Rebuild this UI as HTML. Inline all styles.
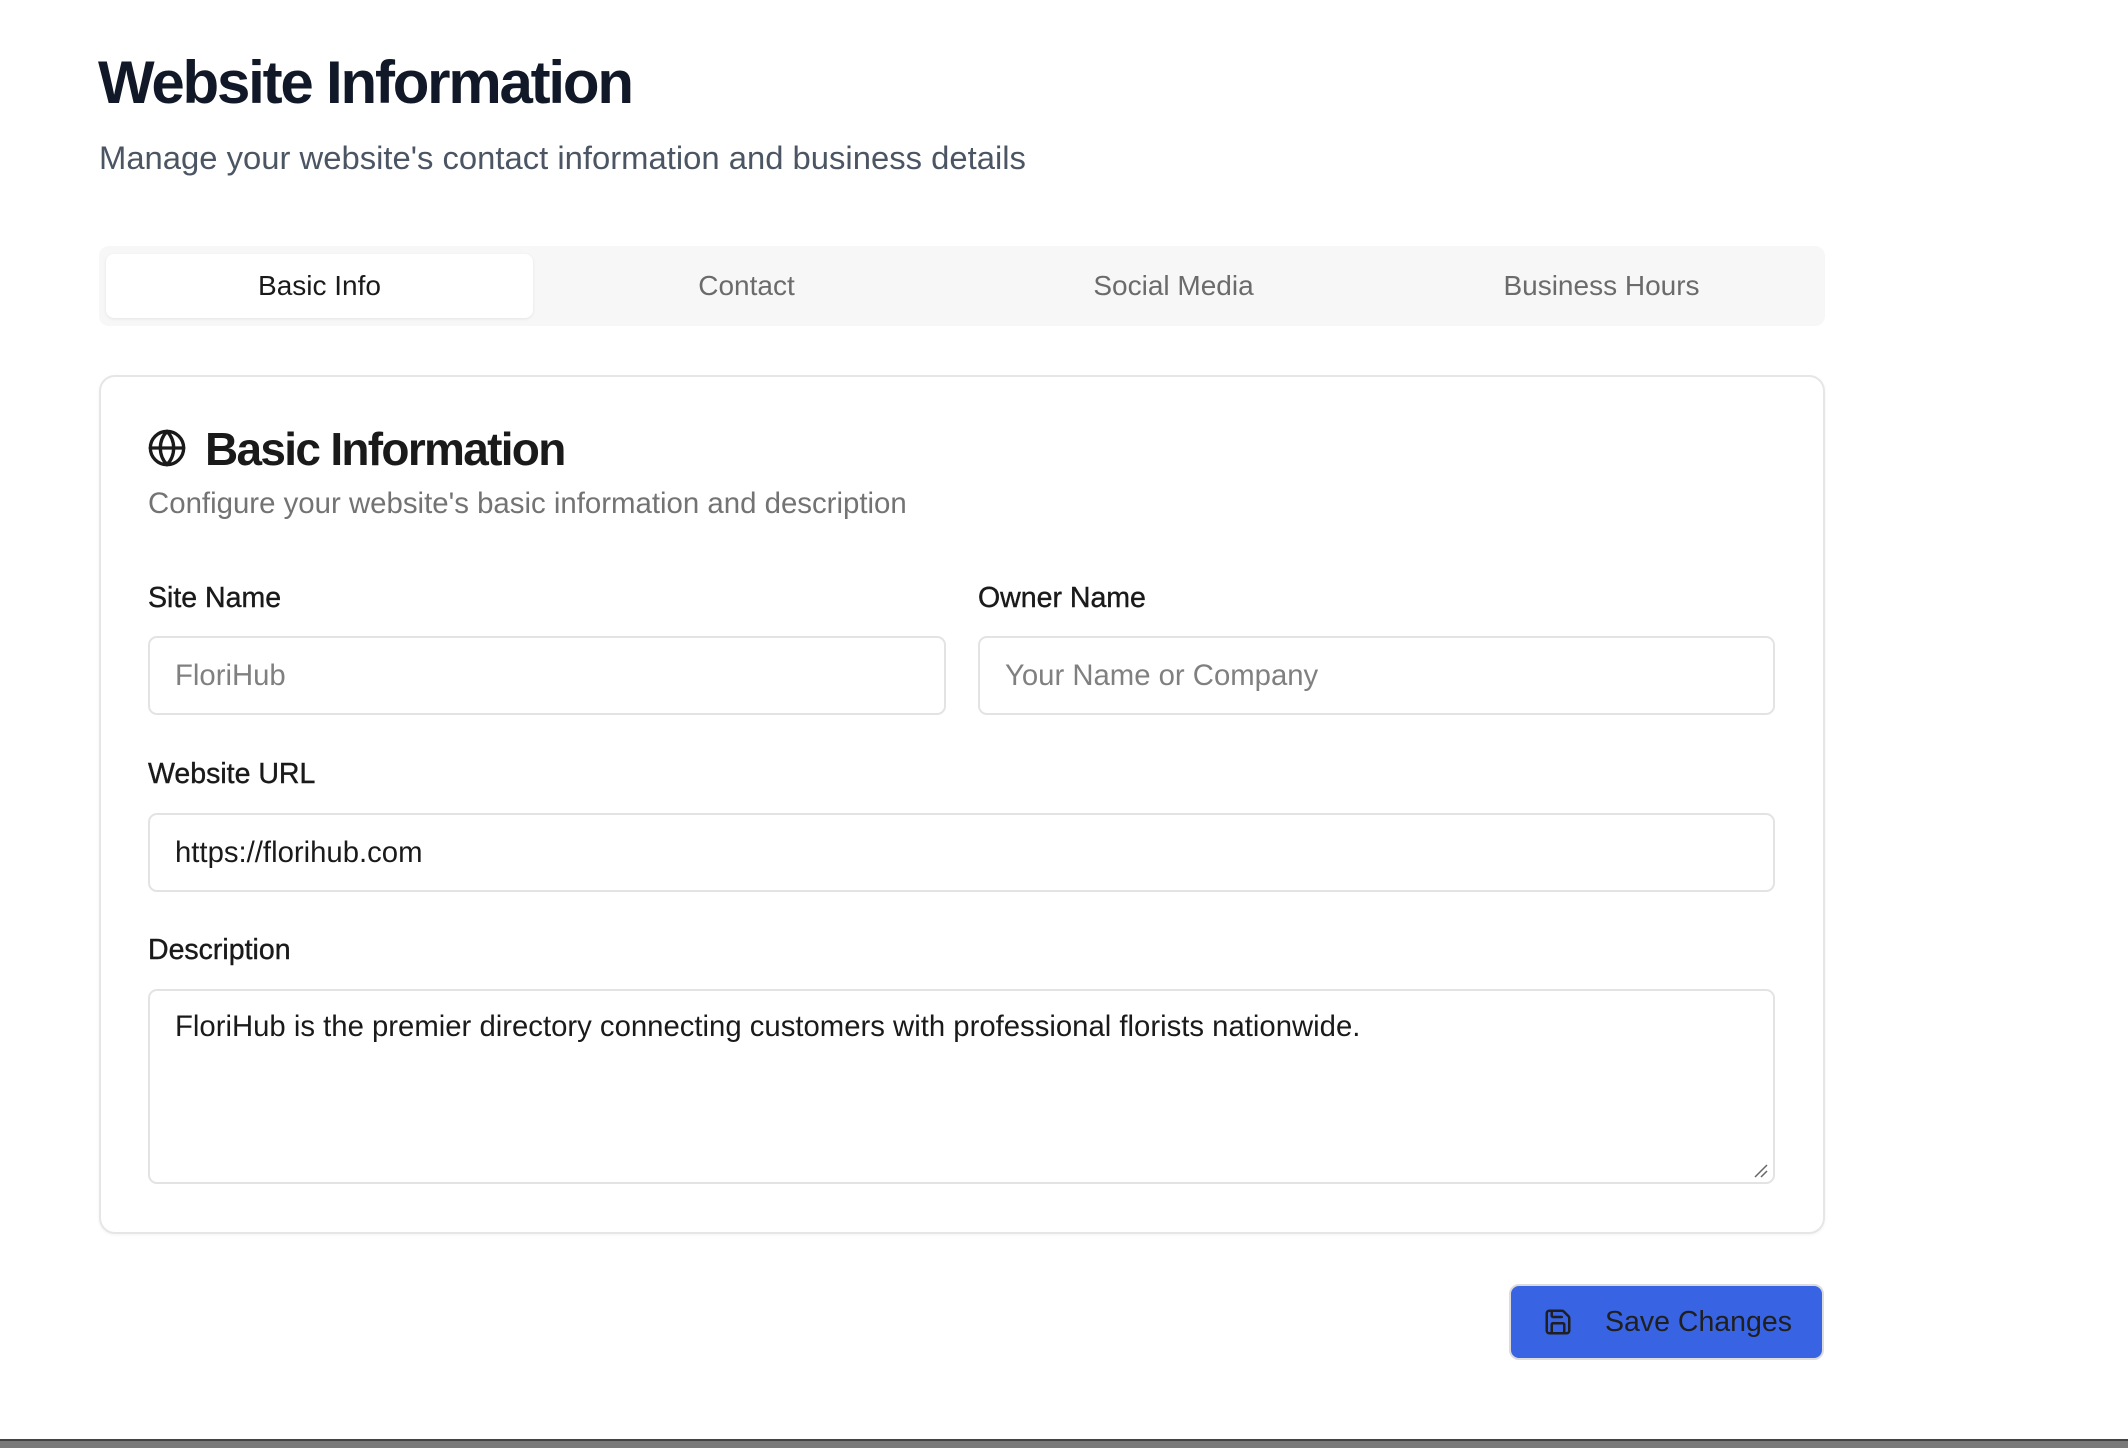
<!DOCTYPE html>
<html><head><meta charset="utf-8"><style>
*{box-sizing:border-box;margin:0;padding:0}
body{width:2128px;height:1448px;background:#fff;font-family:"Liberation Sans",Arial,sans-serif;position:relative;overflow:hidden;color:#1a1a1a}
.abs{position:absolute}
h1{position:absolute;left:98px;top:48px;font-size:60px;font-weight:bold;color:#111827;letter-spacing:-2.2px}
.sub{left:99px;top:139px;font-size:32.8px;color:#4b5563}
.tabs{left:99px;top:246px;width:1726px;height:80px;background:#f7f7f7;border-radius:10px}
.tab{position:absolute;top:8px;height:64px;width:427px;font-size:28px;color:#6b6b6b;display:flex;align-items:center;justify-content:center}
.tab.on{background:#fff;color:#1a1a1a;border-radius:8px;box-shadow:0 1px 3px rgba(0,0,0,.08)}
.card{left:99px;top:375px;width:1726px;height:859px;border:2px solid #e6e6e6;border-radius:16px;box-shadow:0 1px 3px rgba(0,0,0,.05)}
.h2{left:205px;top:422px;font-size:46px;font-weight:bold;letter-spacing:-1.7px;color:#1a1a1a}
.desc{left:148px;top:487px;font-size:29.4px;color:#737373}
.lbl{font-size:28.5px;color:#1a1a1a;left:148px;-webkit-text-stroke:.4px #1a1a1a}
.inp{border:2px solid #e3e3e3;border-radius:9px;font-size:29.3px;padding-left:25px;display:flex;align-items:center;color:#1a1a1a}
.ph{color:#808080}
.btn{left:1509px;top:1284px;width:315px;height:76px;background:#3863e3;border:2px solid #dcdcdc;border-radius:10px;display:flex;align-items:center;font-size:28.5px;color:#1f1f1f}
</style></head><body>
<h1>Website Information</h1>
<div class="abs sub">Manage your website's contact information and business details</div>
<div class="abs tabs">
<div class="tab on" style="left:7px">Basic Info</div>
<div class="tab" style="left:434px">Contact</div>
<div class="tab" style="left:861px">Social Media</div>
<div class="tab" style="left:1289px">Business Hours</div>
</div>
<div class="abs card"></div>
<svg class="abs" style="left:147px;top:428px" width="40" height="40" viewBox="0 0 24 24" fill="none" stroke="#1a1a1a" stroke-width="2" stroke-linecap="round" stroke-linejoin="round"><circle cx="12" cy="12" r="10"/><path d="M12 2a14.5 14.5 0 0 0 0 20 14.5 14.5 0 0 0 0-20"/><path d="M2 12h20"/></svg>
<div class="abs h2">Basic Information</div>
<div class="abs desc">Configure your website's basic information and description</div>
<div class="abs lbl" style="top:582px">Site Name</div>
<div class="abs lbl" style="top:582px;left:978px">Owner Name</div>
<div class="abs inp" style="left:148px;top:636px;width:798px;height:79px"><span class="ph">FloriHub</span></div>
<div class="abs inp" style="left:978px;top:636px;width:797px;height:79px"><span class="ph">Your Name or Company</span></div>
<div class="abs lbl" style="top:758px">Website URL</div>
<div class="abs inp" style="left:148px;top:813px;width:1627px;height:79px">https://florihub.com</div>
<div class="abs lbl" style="top:934px">Description</div>
<div class="abs inp" style="left:148px;top:989px;width:1627px;height:195px;align-items:flex-start;padding-top:19px">FloriHub is the premier directory connecting customers with professional florists nationwide.</div>
<svg class="abs" style="left:1753px;top:1163px" width="16" height="16"><path d="M2 14L14 2M8 14L14 8" stroke="#666" stroke-width="1.5"/></svg>
<div class="abs btn">
<svg style="margin-left:32px" width="30" height="30" viewBox="0 0 24 24" fill="none" stroke="#1f1f1f" stroke-width="2" stroke-linecap="round" stroke-linejoin="round"><path d="M15.2 3a2 2 0 0 1 1.4.6l3.8 3.8a2 2 0 0 1 .6 1.4V19a2 2 0 0 1-2 2H5a2 2 0 0 1-2-2V5a2 2 0 0 1 2-2z"/><path d="M17 21v-7a1 1 0 0 0-1-1H8a1 1 0 0 0-1 1v7"/><path d="M7 3v4a1 1 0 0 0 1 1h7"/></svg>
<span style="margin-left:32px">Save Changes</span></div>
<div class="abs" style="left:0;top:1439px;width:2128px;height:9px;background:#7a7a7a;border-top:2px solid #444"></div>
</body></html>
